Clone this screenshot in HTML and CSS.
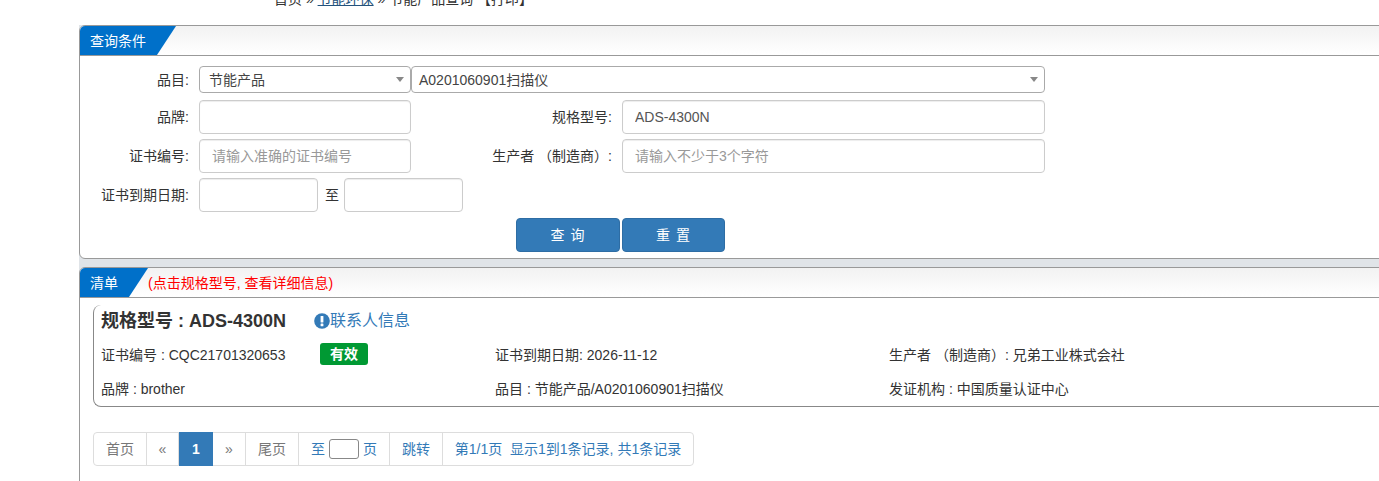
FILE: index.html
```html
<!DOCTYPE html>
<html lang="zh-CN">
<head>
<meta charset="utf-8">
<title>节能产品查询</title>
<link rel="stylesheet" href="styles.css">
</head>
<body>
<div class="crumb">首页 » <a href="#">节能环保</a> » 节能产品查询 【打印】</div>
<main class="page">
  <section class="panel query">
    <header class="panel-head"><h2 class="tab tab-query">查询条件</h2></header>
    <form class="form">
      <div class="row row-select">
        <label class="lbl">品目:</label>
        <div class="select select-a">节能产品<i class="caret"></i></div>
        <div class="select select-b">A0201060901扫描仪<i class="caret"></i></div>
      </div>
      <div class="row">
        <label class="lbl">品牌:</label>
        <input class="field" type="text">
        <label class="lbl lbl-wide">规格型号:</label>
        <input class="field field-wide" type="text" value="ADS-4300N">
      </div>
      <div class="row">
        <label class="lbl">证书编号:</label>
        <input class="field" type="text" placeholder="请输入准确的证书编号">
        <label class="lbl lbl-wide">生产者 （制造商）:</label>
        <input class="field field-wide" type="text" placeholder="请输入不少于3个字符">
      </div>
      <div class="row">
        <label class="lbl">证书到期日期:</label>
        <input class="field field-date" type="text">
        <span class="to">至</span>
        <input class="field field-date" type="text">
      </div>
      <div class="actions">
        <button class="btn btn-search" type="button">查 询</button>
        <button class="btn btn-reset" type="button">重 置</button>
      </div>
    </form>
  </section>
  <section class="panel list">
    <header class="panel-head">
      <h2 class="tab tab-list">清单</h2>
      <span class="hint">(点击规格型号, 查看详细信息)</span>
    </header>
    <article class="card">
      <div class="card-title">
        <strong class="model">规格型号 : ADS-4300N</strong>
        <a class="contact" href="#"><svg class="info" viewBox="0 0 16 16" width="16" height="16"><circle cx="8" cy="8" r="7.8" fill="#337ab7"/><rect x="6.6" y="3" width="2.8" height="6.6" rx="0.6" fill="#fff"/><rect x="6.6" y="10.6" width="2.8" height="2.6" rx="0.5" fill="#fff"/></svg>联系人信息</a>
      </div>
      <div class="card-grid">
        <div class="cell cell-cert"><span class="cert">证书编号 : CQC21701320653</span><span class="badge">有效</span></div>
        <div class="cell">证书到期日期: 2026-11-12</div>
        <div class="cell">生产者 （制造商）: 兄弟工业株式会社</div>
        <div class="cell">品牌 : brother</div>
        <div class="cell">品目 : 节能产品/A0201060901扫描仪</div>
        <div class="cell">发证机构 : 中国质量认证中心</div>
      </div>
    </article>
    <nav class="pager">
      <span class="pg pg-first muted">首页</span>
      <span class="pg pg-prev muted">«</span>
      <span class="pg pg-cur">1</span>
      <span class="pg pg-next muted">»</span>
      <span class="pg pg-last muted">尾页</span>
      <span class="pg pg-goto">至<input class="pg-input" type="text">页</span>
      <span class="pg pg-jump">跳转</span>
      <span class="pg pg-info">第1/1页&nbsp; 显示1到1条记录, 共1条记录</span>
    </nav>
  </section>
</main>
</body>
</html>
```
FILE: styles.css
```css
* { box-sizing: border-box; }
html, body { height: 481px; overflow: hidden; }
body {
  margin: 0;
  background: #fff;
  color: #333;
  font: 14px/20px "Liberation Sans", "Noto Sans CJK SC", sans-serif;
}
.crumb {
  height: 25px;
  margin-top: -11px;
  margin-bottom: 11px;
  padding-left: 274px;
  line-height: 20px;
  color: #333;
}
.crumb a { color: #23527c; text-decoration: underline; }
.page {
  width: 1400px;
  margin-left: 79px;
  background: #e0e4e8;
  display: flex;
  flex-direction: column;
  gap: 8px;
}
.panel {
  background: #fff;
  border: 1px solid #999;
  border-radius: 6px;
  overflow: hidden;
}
.query { height: 234px; }
.list { height: 300px; }
.panel-head {
  display: flex;
  align-items: center;
  height: 30px;
  background: linear-gradient(#f2f2f2, #fff);
  border-bottom: 1px solid #999;
}
.tab {
  margin: 0;
  height: 29px;
  padding-left: 10px;
  background: #0070c9;
  color: #fff;
  font-size: 14px;
  font-weight: normal;
  line-height: 30px;
}
.tab-query { width: 96px; clip-path: polygon(0 0, 100% 0, 77px 100%, 0 100%); }
.tab-list { width: 68px; clip-path: polygon(0 0, 100% 0, 49px 100%, 0 100%); }
.hint { margin-left: 0; color: #f00; font-size: 14px; }
.form { padding-top: 10px; }
.row {
  display: flex;
  align-items: center;
  height: 34px;
  margin-bottom: 5px;
}
.row-select { height: 27px; margin-bottom: 7px; }
.lbl { width: 109px; margin-right: 10px; text-align: right; color: #333; }
.lbl-wide { width: 201px; }
.select {
  position: relative;
  height: 27px;
  border: 1px solid #aaa;
  border-radius: 4px;
  background: #fff;
  color: #444;
  line-height: 26px;
}
.select-a { width: 212px; padding-left: 9px; }
.select-b { width: 634px; padding-left: 7px; }
.caret {
  position: absolute;
  right: 6px;
  top: 10px;
  border-style: solid;
  border-width: 5px 4px 0;
  border-color: #888 transparent transparent;
}
.field {
  width: 212px;
  height: 34px;
  padding: 0 12px;
  border: 1px solid #ccc;
  border-radius: 4px;
  background: #fff;
  color: #555;
  font: inherit;
  box-shadow: inset 0 1px 1px rgba(0,0,0,.075);
}
.field::placeholder { color: #999; opacity: 1; }
.field-wide { width: 423px; }
.field-date { width: 119px; }
.to { margin: 0 5px 0 7px; }
.actions { display: flex; gap: 2px; padding-left: 436px; margin-top: 6px; }
.btn {
  height: 34px;
  border: 1px solid #2e6da4;
  border-radius: 4px;
  background: #337ab7;
  color: #fff;
  font: inherit;
  letter-spacing: 1px;
}
.btn-search { width: 104px; }
.btn-reset { width: 103px; }
.card {
  margin: 7px 0 0 13px;
  height: 102px;
  padding: 1px 0 0 7px;
  border-left: 1px solid #888;
  border-bottom: 1px solid #888;
  border-top: 0 solid transparent;
  border-bottom-left-radius: 8px;
  border-top-left-radius: 8px;
}
.card-title { display: flex; align-items: center; height: 30px; }
.model { font-size: 18px; color: #333; }
.contact {
  display: flex;
  align-items: center;
  margin-left: 28px;
  color: #337ab7;
  font-size: 16px;
  text-decoration: none;
}
.card-grid {
  display: grid;
  grid-template-columns: repeat(3, 394px);
  grid-auto-rows: 34px;
  margin-top: 2px;
  align-items: center;
}
.cell { display: flex; align-items: center; white-space: pre; }
.cert { width: 219px; }
.badge {
  width: 48px;
  height: 22px;
  margin-top: -2px;
  border-radius: 3px;
  background: #093;
  color: #fff;
  font-weight: bold;
  text-align: center;
  line-height: 22px;
}
.pager {
  display: inline-flex;
  height: 34px;
  margin: 25px 0 0 13px;
  border: 1px solid #ddd;
  border-radius: 4px;
}
.pg {
  display: flex;
  align-items: center;
  justify-content: center;
  margin: -1px 0;
  border-right: 1px solid #ddd;
  color: #337ab7;
}
.muted { color: #777; }
.pg-first { width: 53px; }
.pg-prev { width: 32px; }
.pg-cur { width: 34px; background: #337ab7; color: #fff; font-weight: bold; border-right: 0; }
.pg-next { width: 33px; }
.pg-last { width: 53px; }
.pg-goto { width: 91px; }
.pg-input { width: 30px; height: 20px; margin: 0 4px; padding: 0; border: 1px solid #888; border-radius: 3px; background: #fff; }
.pg-jump { width: 53px; }
.pg-info { width: 250px; border-right: 0; white-space: pre; }
```
